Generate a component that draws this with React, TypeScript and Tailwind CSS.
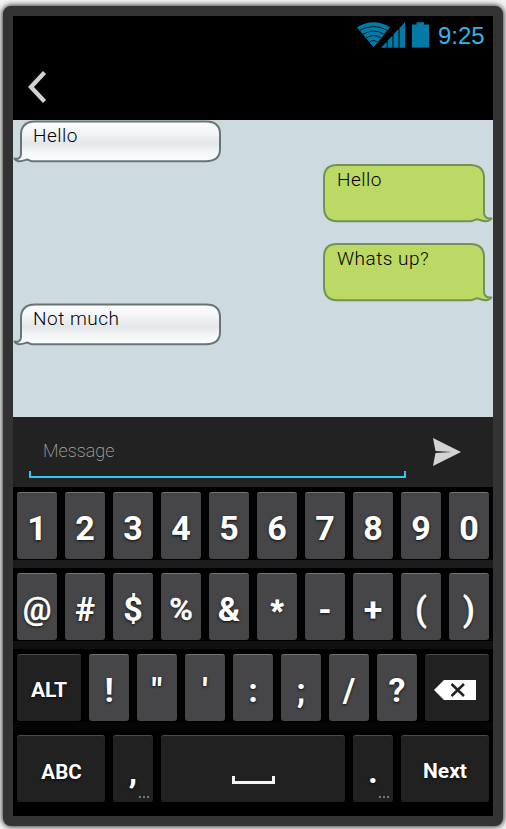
import React from "react";

function IncomingBubble({ id, children }: { id: string; children: React.ReactNode }) {
  return (
    <div className="relative h-[43px] w-[210px]">
      <svg className="absolute inset-0" width="210" height="43" viewBox="0 0 210 43">
        <defs>
          <linearGradient id={id} x1="0" y1="0" x2="0" y2="1">
            <stop offset="0" stopColor="#fdfdfe" />
            <stop offset="0.3" stopColor="#f2f4f5" />
            <stop offset="0.56" stopColor="#e3e7e9" />
            <stop offset="0.75" stopColor="#f3f5f6" />
            <stop offset="1" stopColor="#fdfdfd" />
          </linearGradient>
        </defs>
        <path
          d="M22 1.500H193Q207 1.500 207 14V29Q207 41.200 193 41.200H19C17 41.200 16 39.500 14 39.500C11 40.500 8 41.700 5.500 41.200C3.500 41 2.200 40 1.500 38.500C5 39.500 8 38 8 34V15Q8 1.500 22 1.500Z"
          fill={`url(#${id})`}
          stroke="#687577"
          strokeWidth="2"
          strokeLinejoin="round"
        />
      </svg>
      <p className="relative pt-[5px] pl-5 text-[19px] leading-[22px] font-light tracking-[0.5px] text-black">{children}</p>
    </div>
  );
}

function OutgoingBubble({ children }: { children: React.ReactNode }) {
  return (
    <div className="relative h-[60px] w-[171px] self-end">
      <svg className="absolute inset-0" width="171" height="60" viewBox="0 0 171 60">
        <path
          d="M15 2H148Q162 2 162 15V50C162 54 165 56 169.500 55.500C168 57.500 165 58.500 162 58C159 57.800 157 56.300 155 56.300C153 56.500 151 58.200 148 58.200H15Q2 58.200 2 44V15Q2 2 15 2Z"
          fill="#bbd964"
          stroke="#6e9557"
          strokeWidth="2"
          strokeLinejoin="round"
        />
      </svg>
      <p className="relative pt-[6px] pl-[15px] text-[19px] leading-[22px] font-light tracking-[0.5px] text-black">{children}</p>
    </div>
  );
}

function Key({ children, dark = false, wide = "w-10", small = false, more = false }: {
  children: React.ReactNode;
  dark?: boolean;
  wide?: string;
  small?: boolean;
  more?: boolean;
}) {
  return (
    <div
      className={`relative flex h-[67px] shrink-0 items-center justify-center rounded-[3px] border-t font-bold text-white [text-shadow:0_1px_3px_rgba(0,0,0,.8)] ${wide} ${
        dark ? "border-[#4b4b4b] bg-[#212121]" : "border-[#747474] bg-[#464547]"
      } ${small ? "pt-[6px] text-[21px]" : "pt-[4px] text-[34px]"}`}
    >
      {children}
      {more && (
        <span className="absolute right-1 bottom-[4px] flex gap-[2px]">
          <i className="size-[2px] bg-[#777]" />
          <i className="size-[2px] bg-[#777]" />
          <i className="size-[2px] bg-[#777]" />
        </span>
      )}
    </div>
  );
}

function KeyRow({ children, band }: { children: React.ReactNode; band: string }) {
  return (
    <div className={`h-[81px] border-b-8 ${band}`}>
      <div className="flex gap-2 px-1 pt-[5px]">{children}</div>
    </div>
  );
}

export default function App() {
  return (
    <div className="h-[829px] w-[506px] overflow-hidden bg-[#f1f1f1] pt-[6px] pl-[3px] font-[Roboto,'Liberation_Sans',sans-serif]">
      <div className="flex h-[820px] w-[500px] flex-col rounded-[8px] border-[10px] border-[#333] bg-black shadow-[0_0_5px_1px_rgba(0,0,0,.75)]">
        <header className="h-[104px] shrink-0">
          <div className="flex h-10 items-start justify-end pt-[6px] pr-[9px]">
            <svg width="75" height="27" viewBox="0 0 75 27" className="mr-2">
              <path d="M2 5.200Q18.500 -4.700 35 5.200L18.500 25.200Z" fill="#027aa5" />
              <g fill="none" stroke="#00202c" strokeWidth="1">
                <path d="M4.500 8.500Q18.500 0.500 32.500 8.500" />
                <path d="M7.500 12.500Q18.500 5.500 29.500 12.500" />
                <path d="M10.500 16.500Q18.500 10.500 26.500 16.500" />
                <path d="M14 20.500Q18.500 16.500 23 20.500" />
              </g>
              <path d="M26 25.700L31.700 19.800V25.700ZM32.700 25.700V18.500L37.500 13.400V25.700ZM38.500 25.700V12.200L43.500 7V25.700ZM44.500 25.700V5.900L50 0V25.700Z" fill="#027aa5" />
              <path d="M57 2.500H61.500V0.300H69V2.500H74V25.500H57Z" fill="#027aa5" />
            </svg>
            <time className="w-[46px] font-['Liberation_Sans',sans-serif] text-[24px] leading-[28px] text-[#33b5e5]">9:25</time>
          </div>
          <svg width="40" height="60" viewBox="0 0 40 60">
            <path d="M31.500 16.500L18 31L31.500 45.500" fill="none" stroke="#d3d3d3" strokeWidth="4.300" />
          </svg>
        </header>

        <main className="flex h-[297px] shrink-0 flex-col bg-[#cddadf]">
          <IncomingBubble id="greeting">Hello</IncomingBubble>
          <OutgoingBubble>Hello</OutgoingBubble>
          <div className="mt-[19px] flex flex-col">
            <OutgoingBubble>Whats up?</OutgoingBubble>
          </div>
          <div className="mt-px">
            <IncomingBubble id="answer">Not much</IncomingBubble>
          </div>
        </main>

        <section className="flex h-[70px] shrink-0 bg-[#222] pl-4">
          <div className="flex h-[61px] w-[377px] flex-col justify-end">
            <span className="mb-[9px] pl-[14px] text-[18px] leading-[22px] font-extralight text-[#aaa]">Message</span>
            <div className="h-[7px] border-x-2 border-b-2 border-[#33c5f3]" />
          </div>
          <svg width="60" height="60" viewBox="0 0 60 60" className="ml-[19px]">
            <path d="M8 21L36 35L8 49L10.500 36L27 35L10.500 34Z" fill="#d3d3d3" />
          </svg>
        </section>

        <section className="h-[329px] shrink-0 overflow-hidden">
          <KeyRow band="border-[#1c1b1e]">
            {["1", "2", "3", "4", "5", "6", "7", "8", "9", "0"].map((k) => <Key key={k}>{k}</Key>)}
          </KeyRow>
          <KeyRow band="border-[#101010]">
            <Key><span className="text-[32px] font-medium [-webkit-text-stroke:0.4px_white]">@</span></Key>
            <Key>#</Key>
            <Key>$</Key>
            <Key><span className="text-[32px] font-medium [-webkit-text-stroke:0.5px_white]">%</span></Key>
            <Key>&amp;</Key>
            <Key><span className="pt-[3px] text-[28px] [-webkit-text-stroke:1px_white]">*</span></Key>
            <Key>-</Key>
            <Key>+</Key>
            <Key><span className="font-medium [-webkit-text-stroke:0.5px_white]">(</span></Key>
            <Key><span className="font-medium [-webkit-text-stroke:0.5px_white]">)</span></Key>
          </KeyRow>
          <KeyRow band="border-[#050505]">
            <Key dark small wide="w-16">ALT</Key>
            {["!", '"', "'", ":", ";", "/", "?"].map((k) => <Key key={k}>{k}</Key>)}
            <Key dark wide="w-16">
              <svg width="42" height="20" viewBox="0 0 42 20" className="ml-[-5px]">
                <path d="M0 10L10 0H42V20H10Z" fill="#fff" />
                <path d="M17.500 4L30 16M30 4L17.500 16" stroke="#222" strokeWidth="2.500" />
              </svg>
            </Key>
          </KeyRow>
          <KeyRow band="border-black">
            <Key dark small wide="w-[88px]"><span className="pl-px text-[20.5px]">ABC</span></Key>
            <Key dark more>,</Key>
            <Key dark wide="w-[184px]">
              <svg width="43" height="9" viewBox="0 0 43 9" className="mt-[19px]">
                <path d="M1.500 0V6.500H41.500V0" fill="none" stroke="#f4f4f4" strokeWidth="3" />
              </svg>
            </Key>
            <Key dark more>.</Key>
            <Key dark small wide="w-[88px]">Next</Key>
          </KeyRow>
        </section>
      </div>
    </div>
  );
}
